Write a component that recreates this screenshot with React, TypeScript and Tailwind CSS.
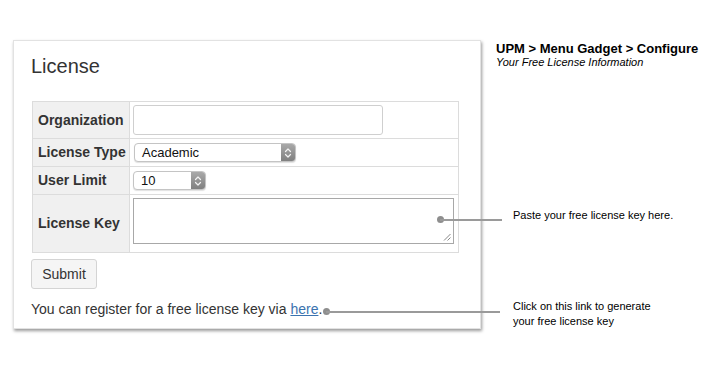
import React from "react";

function Stepper() {
  return (
    <svg width="8" height="12" viewBox="0 0 8 12" fill="none">
      <path d="M1.5 4.5 L4 2 L6.5 4.5" stroke="#f2f2f2" strokeWidth="1.2" strokeLinecap="round" strokeLinejoin="round" />
      <path d="M1.5 7.5 L4 10 L6.5 7.5" stroke="#f2f2f2" strokeWidth="1.2" strokeLinecap="round" strokeLinejoin="round" />
    </svg>
  );
}

function FakeSelect({ value, width, height }: { value: string; width: string; height: string }) {
  return (
    <div
      className={`flex items-stretch ${width} ${height} rounded-[4px] border border-[#c4c4c4] bg-white shadow-[0_1px_1px_rgba(0,0,0,0.12)] overflow-hidden`}
    >
      <div className="flex-1 flex items-center pl-[7px] text-[13px] text-[#111] leading-none">{value}</div>
      <div className="w-[14px] flex items-center justify-center bg-gradient-to-b from-[#a9a9a9] to-[#808080]">
        <Stepper />
      </div>
    </div>
  );
}

export default function App() {
  return (
    <div className="relative w-[713px] h-[375px] bg-white font-['Liberation_Sans',Arial,sans-serif] text-[#333]">
      <div className="flex items-start pt-[40px] pl-[13px]">
        {/* Card */}
        <div className="w-[468px] h-[289px] border border-[#e2e2e2] bg-white shadow-[1px_2px_3px_rgba(0,0,0,0.4)] pl-[17px] pt-[13px]">
          <h1 className="text-[20px] leading-[24px] font-normal text-[#333]">License</h1>

          <div className="mt-[23px] ml-[1px] w-[427px] border border-[#dcdcdc]">
            {/* Organization */}
            <div className="flex h-[36px]">
              <div className="w-[97px] shrink-0 bg-[#f0f0f0] border-r border-[#dcdcdc] flex items-center pl-[5px] text-[14px] font-bold">
                Organization
              </div>
              <div className="flex-1 flex items-center pl-[3px]">
                <div className="w-[250px] h-[30px] rounded-[3px] border border-[#cfcfcf] bg-white" />
              </div>
            </div>
            {/* License Type */}
            <div className="flex h-[28px] border-t border-[#dcdcdc]">
              <div className="w-[97px] shrink-0 bg-[#f0f0f0] border-r border-[#dcdcdc] flex items-center pl-[5px] text-[14px] font-bold">
                License Type
              </div>
              <div className="flex-1 flex items-center pl-[4px]">
                <FakeSelect value="Academic" width="w-[162px]" height="h-[19px]" />
              </div>
            </div>
            {/* User Limit */}
            <div className="flex h-[28px] border-t border-[#dcdcdc]">
              <div className="w-[97px] shrink-0 bg-[#f0f0f0] border-r border-[#dcdcdc] flex items-center pl-[5px] text-[14px] font-bold">
                User Limit
              </div>
              <div className="flex-1 flex items-center pl-[3px]">
                <FakeSelect value="10" width="w-[73px]" height="h-[19px]" />
              </div>
            </div>
            {/* License Key */}
            <div className="flex h-[58px] border-t border-[#dcdcdc]">
              <div className="w-[97px] shrink-0 bg-[#f0f0f0] border-r border-[#dcdcdc] flex items-center pl-[5px] text-[14px] font-bold">
                License Key
              </div>
              <div className="flex-1 flex items-start pl-[3px] pt-[3px]">
                <div className="relative w-[321px] h-[46px] border border-[#a8a8a8] bg-white">
                  <svg className="absolute right-[2px] bottom-[2px]" width="8" height="8" viewBox="0 0 8 8">
                    <path d="M7.5 1 L1 7.5 M7.5 4.5 L4.5 7.5" stroke="#888" strokeWidth="1" />
                  </svg>
                </div>
              </div>
            </div>
          </div>

          <button className="mt-[6px] w-[66px] h-[30px] rounded-[3px] border border-[#d4d4d4] bg-[#f5f5f5] text-[14px] text-[#333] leading-none">
            Submit
          </button>

          <p className="mt-[10px] text-[14px] leading-[20px] text-[#333]">
            You can register for a free license key via{" "}
            <a href="#" className="text-[#3b73af] underline">
              here
            </a>
            .
          </p>
        </div>

        {/* Right column */}
        <div className="ml-[15px] pt-[2px] w-[210px]">
          <div className="text-[13px] leading-[13px] font-bold text-black">UPM &gt; Menu Gadget &gt; Configure</div>
          <div className="mt-[1.5px] text-[11px] leading-[11px] italic text-black">Your Free License Information</div>
          <div className="mt-[140px] ml-[17px] text-[11px] leading-[14px] text-black">Paste your free license key here.</div>
          <div className="mt-[77px] ml-[17px] text-[11px] leading-[15px] text-black">
            Click on this link to generate
            <br />
            your free license key
          </div>
        </div>
      </div>

      {/* Callout connectors */}
      <div className="absolute left-[437px] top-[216px] w-[7px] h-[7px] rounded-full bg-[#8e8e8e]" />
      <div className="absolute left-[440px] top-[219px] w-[62px] h-[2px] bg-[#9a9a9a]" />
      <div className="absolute left-[323px] top-[308px] w-[7px] h-[7px] rounded-full bg-[#8e8e8e]" />
      <div className="absolute left-[326px] top-[311px] w-[174px] h-[2px] bg-[#9a9a9a]" />
    </div>
  );
}
